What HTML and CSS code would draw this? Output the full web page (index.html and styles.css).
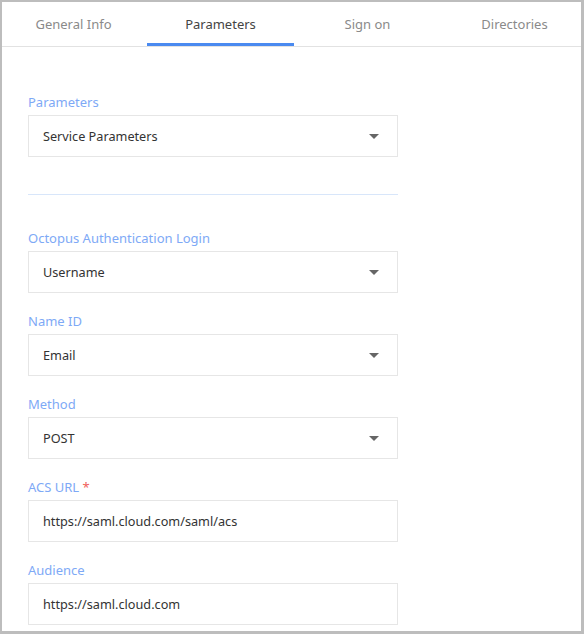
FILE: index.html
```html
<!DOCTYPE html>
<html lang="en">
<head>
	<meta charset="utf-8">
	<title>SAML App - Parameters</title>
	<link rel="stylesheet" href="styles.css">
</head>
<body>
	<div class="frame">
		<div class="tabs">
			<div class="tab">General Info</div>
			<div class="tab active">Parameters</div>
			<div class="tab">Sign on</div>
			<div class="tab">Directories</div>
		</div>
		<div class="form">
			<div class="field">
				<label>Parameters</label>
				<div class="select">Service Parameters<span class="caret"></span></div>
			</div>
			<hr class="divider">
			<div class="field">
				<label>Octopus Authentication Login</label>
				<div class="select">Username<span class="caret"></span></div>
			</div>
			<div class="field">
				<label>Name ID</label>
				<div class="select">Email<span class="caret"></span></div>
			</div>
			<div class="field">
				<label>Method</label>
				<div class="select">POST<span class="caret"></span></div>
			</div>
			<div class="field">
				<label>ACS URL <span class="req">*</span></label>
				<div class="input">https://saml.cloud.com/saml/acs</div>
			</div>
			<div class="field">
				<label>Audience</label>
				<div class="input">https://saml.cloud.com</div>
			</div>
		</div>
	</div>
</body>
</html>
```

FILE: styles.css
```css
html, body {
	margin: 0;
	padding: 0;
	background: #ffffff;
}
body {
	font-family: "Noto Sans", "Open Sans", sans-serif;
	font-size: 13px;
	color: #333333;
}
.frame {
	width: 584px;
	height: 634px;
	box-sizing: border-box;
	border-style: solid;
	border-color: #bdbdbd;
	border-width: 2px 3px 3px 2px;
	overflow: hidden;
}
.tabs {
	display: flex;
	height: 44px;
	margin-left: -2px;
	border-bottom: 1px solid #e2e2e2;
}
.tab {
	flex: 0 0 147px;
	box-sizing: border-box;
	text-align: center;
	padding-top: 13px;
	color: #8a8a8a;
}
.tab.active {
	color: #444444;
	border-bottom: 3px solid #4a8af0;
}
.form {
	padding: 47px 0 0 26px;
	width: 370px;
}
.field {
	margin-bottom: 20px;
}
.field label {
	display: block;
	line-height: 16px;
	margin-bottom: 5px;
	color: #7ea9f6;
}
.req {
	color: #f0605a;
}
.select, .input {
	position: relative;
	height: 40px;
	line-height: 40px;
	padding: 0 14px;
	border: 1px solid #e6e6e6;
	font-size: 12.7px;
	color: #333333;
}
.caret {
	position: absolute;
	right: 18px;
	top: 18px;
	width: 0;
	height: 0;
	border-left: 5px solid transparent;
	border-right: 5px solid transparent;
	border-top: 5px solid #666666;
}
.divider {
	border: 0;
	border-top: 1px solid #d8e6fa;
	margin: 37px 0 35px;
}
```
